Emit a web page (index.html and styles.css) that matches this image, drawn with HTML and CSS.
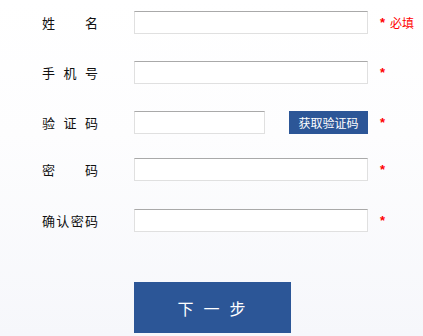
FILE: index.html
```html
<!DOCTYPE html>
<html lang="zh-CN">
<head>
<meta charset="utf-8">
<title>注册</title>
<link rel="stylesheet" href="styles.css">
</head>
<body>
<form class="form">
  <div class="row">
    <label class="label"><span>姓</span><span>名</span></label>
    <input class="field" type="text">
    <span class="req">*</span><span class="req-text">必填</span>
  </div>
  <div class="row">
    <label class="label"><span>手</span><span>机</span><span>号</span></label>
    <input class="field" type="text">
    <span class="req">*</span>
  </div>
  <div class="row">
    <label class="label"><span>验</span><span>证</span><span>码</span></label>
    <input class="field field-short" type="text">
    <button class="code-btn" type="button">获取验证码</button>
    <span class="req">*</span>
  </div>
  <div class="row row-pw">
    <label class="label"><span>密</span><span>码</span></label>
    <input class="field" type="password">
    <span class="req">*</span>
  </div>
  <div class="row row-confirm">
    <label class="label"><span>确</span><span>认</span><span>密</span><span>码</span></label>
    <input class="field" type="password">
    <span class="req">*</span>
  </div>
  <div class="actions">
    <button class="next-btn" type="button">下一步</button>
  </div>
</form>
</body>
</html>
```
FILE: styles.css
```css
html, body {
  margin: 0;
  padding: 0;
}
body {
  width: 423px;
  height: 336px;
  overflow: hidden;
  background: linear-gradient(to bottom, #ffffff 0%, #fdfdfe 40%, #f6f7fb 100%);
  font-family: "Noto Sans CJK SC", "Liberation Sans", sans-serif;
  color: #111;
}
.form {
  padding: 11px 0 0 42px;
}
.row {
  display: flex;
  align-items: center;
  height: 23px;
}
.row + .row {
  margin-top: 27px;
}
.row.row-pw {
  margin-top: 24px;
}
.row.row-confirm {
  margin-top: 28px;
}
.label {
  display: flex;
  justify-content: space-between;
  width: 56px;
  font-size: 13px;
  line-height: 15px;
  margin-right: 36px;
}
.field {
  box-sizing: border-box;
  width: 234px;
  height: 23px;
  margin: 0;
  padding: 0 4px;
  border: 1px solid #e0e0e0;
  border-top-color: #a9a9a9;
  background: #fff;
  outline: none;
}
.field-short {
  width: 131px;
}
.code-btn {
  box-sizing: border-box;
  width: 79px;
  height: 23px;
  margin: 0 0 0 24px;
  padding: 0;
  border: none;
  background: #2c5697;
  color: #fff;
  font-family: "Noto Sans CJK SC", sans-serif;
  font-size: 12px;
  line-height: 23px;
}
.req {
  margin-left: 12px;
  color: #ff0000;
  font-family: "Liberation Sans", sans-serif;
  font-size: 13px;
  font-weight: bold;
  line-height: 12px;
}
.req-text {
  margin-left: 5px;
  color: #ff0000;
  font-size: 12px;
  line-height: 14px;
}
.actions {
  margin-top: 50px;
  padding-left: 92px;
}
.next-btn {
  display: block;
  width: 157px;
  height: 51px;
  margin: 0;
  padding: 0 0 0 8px;
  border: none;
  background: #2c5697;
  color: #fff;
  font-family: "Noto Sans CJK SC", sans-serif;
  font-size: 16px;
  letter-spacing: 10px;
}
```
